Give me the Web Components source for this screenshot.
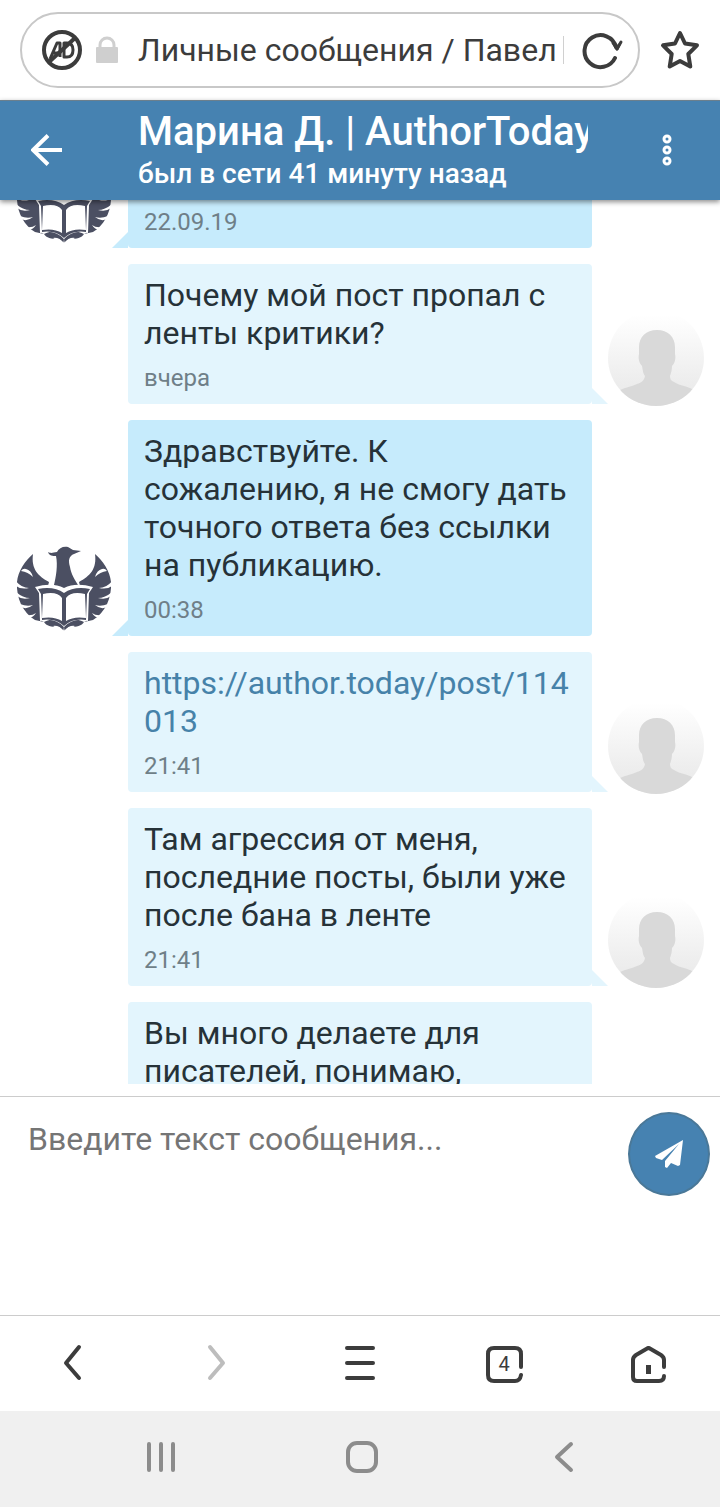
<!DOCTYPE html>
<html lang="ru">
<head>
<meta charset="utf-8">
<meta name="viewport" content="width=device-width, initial-scale=1">
<title>Личные сообщения</title>
<style>
  body { margin: 0; background: #fff; font-family: Roboto, "Noto Sans", sans-serif; color: #263238; }
</style>
</head>
<body>
<chat-app></chat-app>

<script>
const base = `<style>
  * { box-sizing: border-box; }
  button { border: 0; padding: 0; background: none; color: inherit; font: inherit; display: flex; align-items: center; justify-content: center; flex: none; }
  svg { display: block; flex: none; }
</style>`;

function define(name, html, setup) {
  const template = document.createElement('template');
  template.innerHTML = base + html;
  customElements.define(name, class extends HTMLElement {
    constructor() {
      super();
      this.attachShadow({ mode: 'open' }).append(template.content.cloneNode(true));
    }
    connectedCallback() { if (setup) setup(this, this.shadowRoot); }
  });
}

define('browser-bar', `
<style>
  :host { display: flex; align-items: center; height: 100px; padding: 0 20px; gap: 20px; color: #3c3c3c; flex: none; }
  .pill { flex: 1; min-width: 0; height: 76px; border: 2px solid #c8c8c8; border-radius: 38px; display: flex; align-items: center; padding: 0 14px 0 20px; }
  .lock { margin: 0 19px 0 13px; }
  input { flex: 1; min-width: 0; height: 44px; border: 0; padding: 0; background: none; color: inherit; font: 32px/44px Roboto, sans-serif; outline: 0; }
  .reload { border-left: 1px solid #d0d0d0; height: 28px; padding-left: 16px; }
</style>
<div class="pill">
  <button aria-label="Блокировка рекламы"><svg width="40" height="40" viewBox="0 0 40 40" fill="none" stroke="currentColor" stroke-width="4">
    <circle cx="20" cy="20" r="18"/>
    <path stroke-width="3" stroke-linejoin="round" d="M8 29l7-16h3v14M11 23h7M22 13v14h3q6 0 6-7t-6-7zM22 13"/><path d="M7 32L33 8"/></svg></button>
  <svg class="lock" width="24" height="28" viewBox="0 0 24 28"><path d="M5 12V9a7 7 0 0 1 14 0v3" fill="none" stroke="#cfcfcf" stroke-width="3"/><rect x="1" y="11" width="22" height="16" rx="1" fill="#cfcfcf"/></svg>
  <input type="text" aria-label="Адрес страницы" value="Личные сообщения / Павел">
  <button class="reload" aria-label="Обновить"><svg width="44" height="40" viewBox="0 0 44 40" fill="none" stroke="currentColor" stroke-width="4" stroke-linecap="round" stroke-linejoin="round"><path d="M35 28A16 16 0 1 1 36 17"/><path stroke-width="3" d="M33 13l4 6 4-7"/><path stroke-width="3" d="M35 15l2 4 2-4"/></svg></button>
</div>
<button aria-label="В закладки"><svg width="40" height="40" viewBox="0 0 40 40" fill="none" stroke="currentColor" stroke-width="4" stroke-linejoin="round"><path d="M20 3l5 10.500 12 1.800-8.700 8.700 2 12.500L20 31 9.700 36.500l2-12.500L3 15.300 15 13.500z"/></svg></button>
`);

define('chat-header', `
<style>
  :host { display: flex; align-items: center; height: 100px; padding: 0 42px 0 31px; background: #4682b1; box-shadow: 0 2px 5px rgba(0,0,0,.45), inset 0 1px #6b7f8d; color: #fff; position: relative; z-index: 1; flex: none; }
  .who { flex: 1; min-width: 0; margin: 0 69px 0 75px; font-weight: 500; }
  h1 { margin: 0; font: inherit; font-size: 40px; line-height: 48px; white-space: nowrap; overflow: hidden; }
  p { margin: 0; font-size: 28px; line-height: 36px; white-space: nowrap; }
</style>
<button aria-label="Назад"><svg width="32" height="32" viewBox="0 0 32 32" fill="none" stroke="currentColor" stroke-width="4"><path d="M31 16H3M17 1.500L2 16l15 14.500"/></svg></button>
<div class="who"><h1><slot name="name"></slot></h1><p><slot name="status"></slot></p></div>
<button aria-label="Меню"><svg width="21" height="32" viewBox="0 0 21 32" fill="none" stroke="currentColor" stroke-width="3"><circle cx="10" cy="5" r="3"/><circle cx="10" cy="16" r="3"/><circle cx="10" cy="27" r="3"/></svg></button>
`);

define('phoenix-avatar', `
<style>:host { display: block; width: 96px; height: 96px; }</style>
<svg width="96" height="96" viewBox="0 0 96 96" fill="#4b4f62" role="img" aria-label="AuthorToday">
  <path d="M38 45C40 37 42 25 40 16c-3 0-7 0-8-4 4 2 5 0 9 0 2-4 6-6 11-5l5 3 8 1-7 3c-5 2-6 6-4 13 1 7 5 13 8 18l-14 7z"/>
  <g id="w">
    <path d="M17 14C9 21 2 31 1 42c-1 16 6 31 18 38l9 2c2 4 8 5 13 5 4 0 5 3 4 7 5-5 3-12-2-14-6-2-11 0-15 2l-4-2V56l-2-7c3-3 7-3 10-3l1-4C22 36 15 29 17 14z"/>
    <path d="M-1 40q6 8 14 8-10 2-15-4zM0 52q7 6 14 6-8 2-13-2zM4 64q7 3 13 1-6 5-12 2zM10 75q6 1 10-2-4 6-9 4zM5 31q2-3 5-2 5 1 7 8-5-5-12-6z" fill="#fff"/>
  </g>
  <use href="#w" transform="translate(96 0) scale(-1 1)"/>
  <path fill="#fff" d="M19 47q17-5 29 1 12-6 29-1l-4 6-1 28q-14-4-24 6-10-10-24-6l-1-28z"/>
  <path d="M22 49q16-3 26 4 10-7 26-4l-3 5-1 26q-13-2-22 6-9-8-22-6l-1-26z"/>
  <path fill="#fff" d="M27 54q14-3 19 4v23q-8-5-20-3zM69 54q-14-3-19 4v23q8-5 20-3z"/>
  <path fill="#fff" d="M37 86q6-1 11 5 5-6 11-5l-6 4-3 6h-4l-3-6z"/>
</svg>`);

define('person-avatar', `
<style>:host { display: block; width: 96px; height: 96px; } svg { overflow: visible; }</style>
<svg width="96" height="96" viewBox="0 -2 96 96" role="img" aria-label="Без фото">
  <defs><linearGradient id="g" x2="0" y2="1"><stop offset=".05" stop-color="#fff"/><stop offset=".7" stop-color="#eee"/><stop offset="1" stop-color="#e8e8e8"/></linearGradient>
  <clipPath id="c"><circle cx="48" cy="48" r="48"/></clipPath></defs>
  <circle cx="48" cy="48" r="48" fill="url(#g)"/>
  <path clip-path="url(#c)" fill="#d9d9d9" d="M49 20c-11 0-18 7-18 17v7c-1 4 0 9 3 12 1 5 1 8 3 10-1 5-4 7-8 8-6 3-11 3-17 6v16h74V80c-6-4-14-4-20-8-3-1-4-3-4-6 1-3 2-6 2-10 3-3 4-8 3-12v-7c0-10-7-17-18-17z"/>
</svg>`);

define('chat-message', `
<style>
  :host { display: grid; grid-template-columns: 96px minmax(0, 1fr) 96px; gap: 16px; align-items: end; --bubble: #e3f5fd; }
  :host([from=support]) { --bubble: #c6ebfc; }
  .bubble { grid-column: 2; grid-row: 1; align-self: stretch; position: relative; min-height: 96px; display: flex; flex-direction: column; gap: 12px; padding: 12px 16px; background: var(--bubble); border-radius: 4px; font-size: 32px; line-height: 38px; overflow-wrap: anywhere; }
  .bubble::after { content: ""; position: absolute; bottom: 0; left: 100%; width: 16px; height: 16px; background: var(--bubble); clip-path: polygon(0 0, 100% 100%, 0 100%); }
  :host([from=support]) .bubble::after { left: auto; right: 100%; clip-path: polygon(100% 0, 100% 100%, 0 100%); }
  .avatar { grid-column: 3; grid-row: 1; }
  :host([from=support]) .avatar { grid-column: 1; }
  time { margin-top: auto; font-size: 24px; line-height: 28px; color: #6f7f88; }
</style>
<div class="bubble"><slot></slot><time></time></div>
<div class="avatar"></div>
`, (el, root) => {
  root.querySelector('time').textContent = el.getAttribute('time') || '';
  const kind = el.getAttribute('from') === 'support' ? 'phoenix-avatar' : 'person-avatar';
  root.querySelector('.avatar').replaceChildren(document.createElement(kind));
});

define('chat-history', `
<style>
  :host { display: block; flex: 1; min-height: 0; overflow: hidden; margin-bottom: 12px; }
  /* the history is scrolled: its oldest message is half hidden under the header */
  .list { display: flex; flex-direction: column; gap: 16px; padding: 0 16px; margin-top: -48px; }
  ::slotted(:last-child) { min-height: 216px; }
</style>
<div class="list"><slot></slot></div>`);

define('chat-composer', `
<style>
  :host { display: flex; align-items: flex-start; height: 219px; border-top: 1px solid #ccc; padding: 15px 10px 16px 28px; gap: 16px; flex: none; }
  textarea { flex: 1; min-width: 0; align-self: stretch; border: 0; padding: 8px 0; resize: none; outline: 0; background: none; color: inherit; font: 32px/38px Roboto, sans-serif; }
  textarea::placeholder { color: #757575; }
  button { width: 82px; height: 84px; border-radius: 50%; background: #4682b1; border: 2px solid #4a7898; color: #fff; }
</style>
<textarea aria-label="Сообщение" placeholder="Введите текст сообщения..."></textarea>
<button aria-label="Отправить"><svg width="30" height="30" viewBox="0 0 30 30" fill="currentColor"><path d="M29 1L1 17l1 2 6 2L25 5 11 22v6l2 1 4-5 7 3 2-1z"/></svg></button>
`);

define('browser-nav', `
<style>
  :host { display: grid; grid-template-columns: repeat(5, 1fr); height: 96px; border-top: 1px solid #ccc; color: #3c3c3c; flex: none; }
  .off { color: #bdbdbd; }
  .tabs { position: relative; }
  .tabs span { position: absolute; font-size: 20px; line-height: 24px; }
</style>
<button aria-label="Назад"><svg width="40" height="40" viewBox="0 0 40 40" fill="none" stroke="currentColor" stroke-width="4" stroke-linecap="round" stroke-linejoin="round"><path d="M27 3L14 19 27 34"/></svg></button>
<button class="off" aria-label="Вперёд" disabled><svg width="40" height="40" viewBox="0 0 40 40" fill="none" stroke="currentColor" stroke-width="4" stroke-linecap="round" stroke-linejoin="round"><path d="M14 3l13 16L14 34"/></svg></button>
<button aria-label="Меню"><svg width="40" height="40" viewBox="0 0 40 40" fill="none" stroke="currentColor" stroke-width="4" stroke-linecap="round"><path d="M7 4h26M7 19h26M7 34h26"/></svg></button>
<button class="tabs" aria-label="Вкладки"><svg width="40" height="40" viewBox="0 0 40 40" fill="none" stroke="currentColor" stroke-width="4" stroke-linecap="round"><path d="M37 23V10q0-6-6-6H10q-6 0-6 6v21q0 6 6 6h21q5 0 6-6"/></svg><span>4</span></button>
<button aria-label="Домой"><svg width="40" height="40" viewBox="0 0 40 40" fill="none" stroke="currentColor" stroke-width="4" stroke-linecap="round" stroke-linejoin="round"><path d="M36 23V16q0-3-3-5L21 4h-1L8 11q-3 2-3 5v17q0 4 4 4h22q5 0 5-5"/><path stroke-width="5" stroke-linecap="butt" d="M20.500 21v9"/></svg></button>
`);

define('system-nav', `
<style>
  :host { display: flex; align-items: center; justify-content: center; gap: 161px; height: 96px; padding: 0 0 4px 4px; background: #f0f0f0; color: #8c8c8c; flex: none; }
</style>
<button aria-label="Недавние"><svg width="40" height="40" viewBox="0 0 40 40" stroke="currentColor" stroke-width="4" stroke-linecap="round"><path d="M8 7v26M20 7v26M32 7v26"/></svg></button>
<button aria-label="Главный экран"><svg width="40" height="40" viewBox="0 0 40 40" fill="none" stroke="currentColor" stroke-width="4"><rect x="6" y="6" width="28" height="28" rx="9"/></svg></button>
<button aria-label="Назад"><svg width="40" height="40" viewBox="0 0 40 40" fill="none" stroke="currentColor" stroke-width="4" stroke-linecap="round" stroke-linejoin="round"><path d="M28 7L14 20l14 13"/></svg></button>
`);

define('chat-app', `
<style>
  :host { display: flex; flex-direction: column; height: 100vh; overflow: hidden; }
  a { color: #4682a9; text-decoration: none; }
</style>
<browser-bar></browser-bar>
<chat-header><span slot="name">Марина Д. | AuthorToday</span><span slot="status">был в сети 41 минуту назад</span></chat-header>
<chat-history>
  <chat-message from="support" time="22.09.19"></chat-message>
  <chat-message time="вчера"><span>Почему мой пост пропал с ленты критики?</span></chat-message>
  <chat-message from="support" time="00:38"><span>Здравствуйте. К сожалению, я не смогу дать точного ответа без ссылки на публикацию.</span></chat-message>
  <chat-message time="21:41"><a href="https://author.today/post/114013">https://author.today/post/114013</a></chat-message>
  <chat-message time="21:41"><span>Там агрессия от меня, последние посты, были уже после бана в ленте</span></chat-message>
  <chat-message><span>Вы много делаете для писателей, понимаю,</span></chat-message>
</chat-history>
<chat-composer></chat-composer>
<browser-nav></browser-nav>
<system-nav></system-nav>
`);
</script>
</body>
</html>
